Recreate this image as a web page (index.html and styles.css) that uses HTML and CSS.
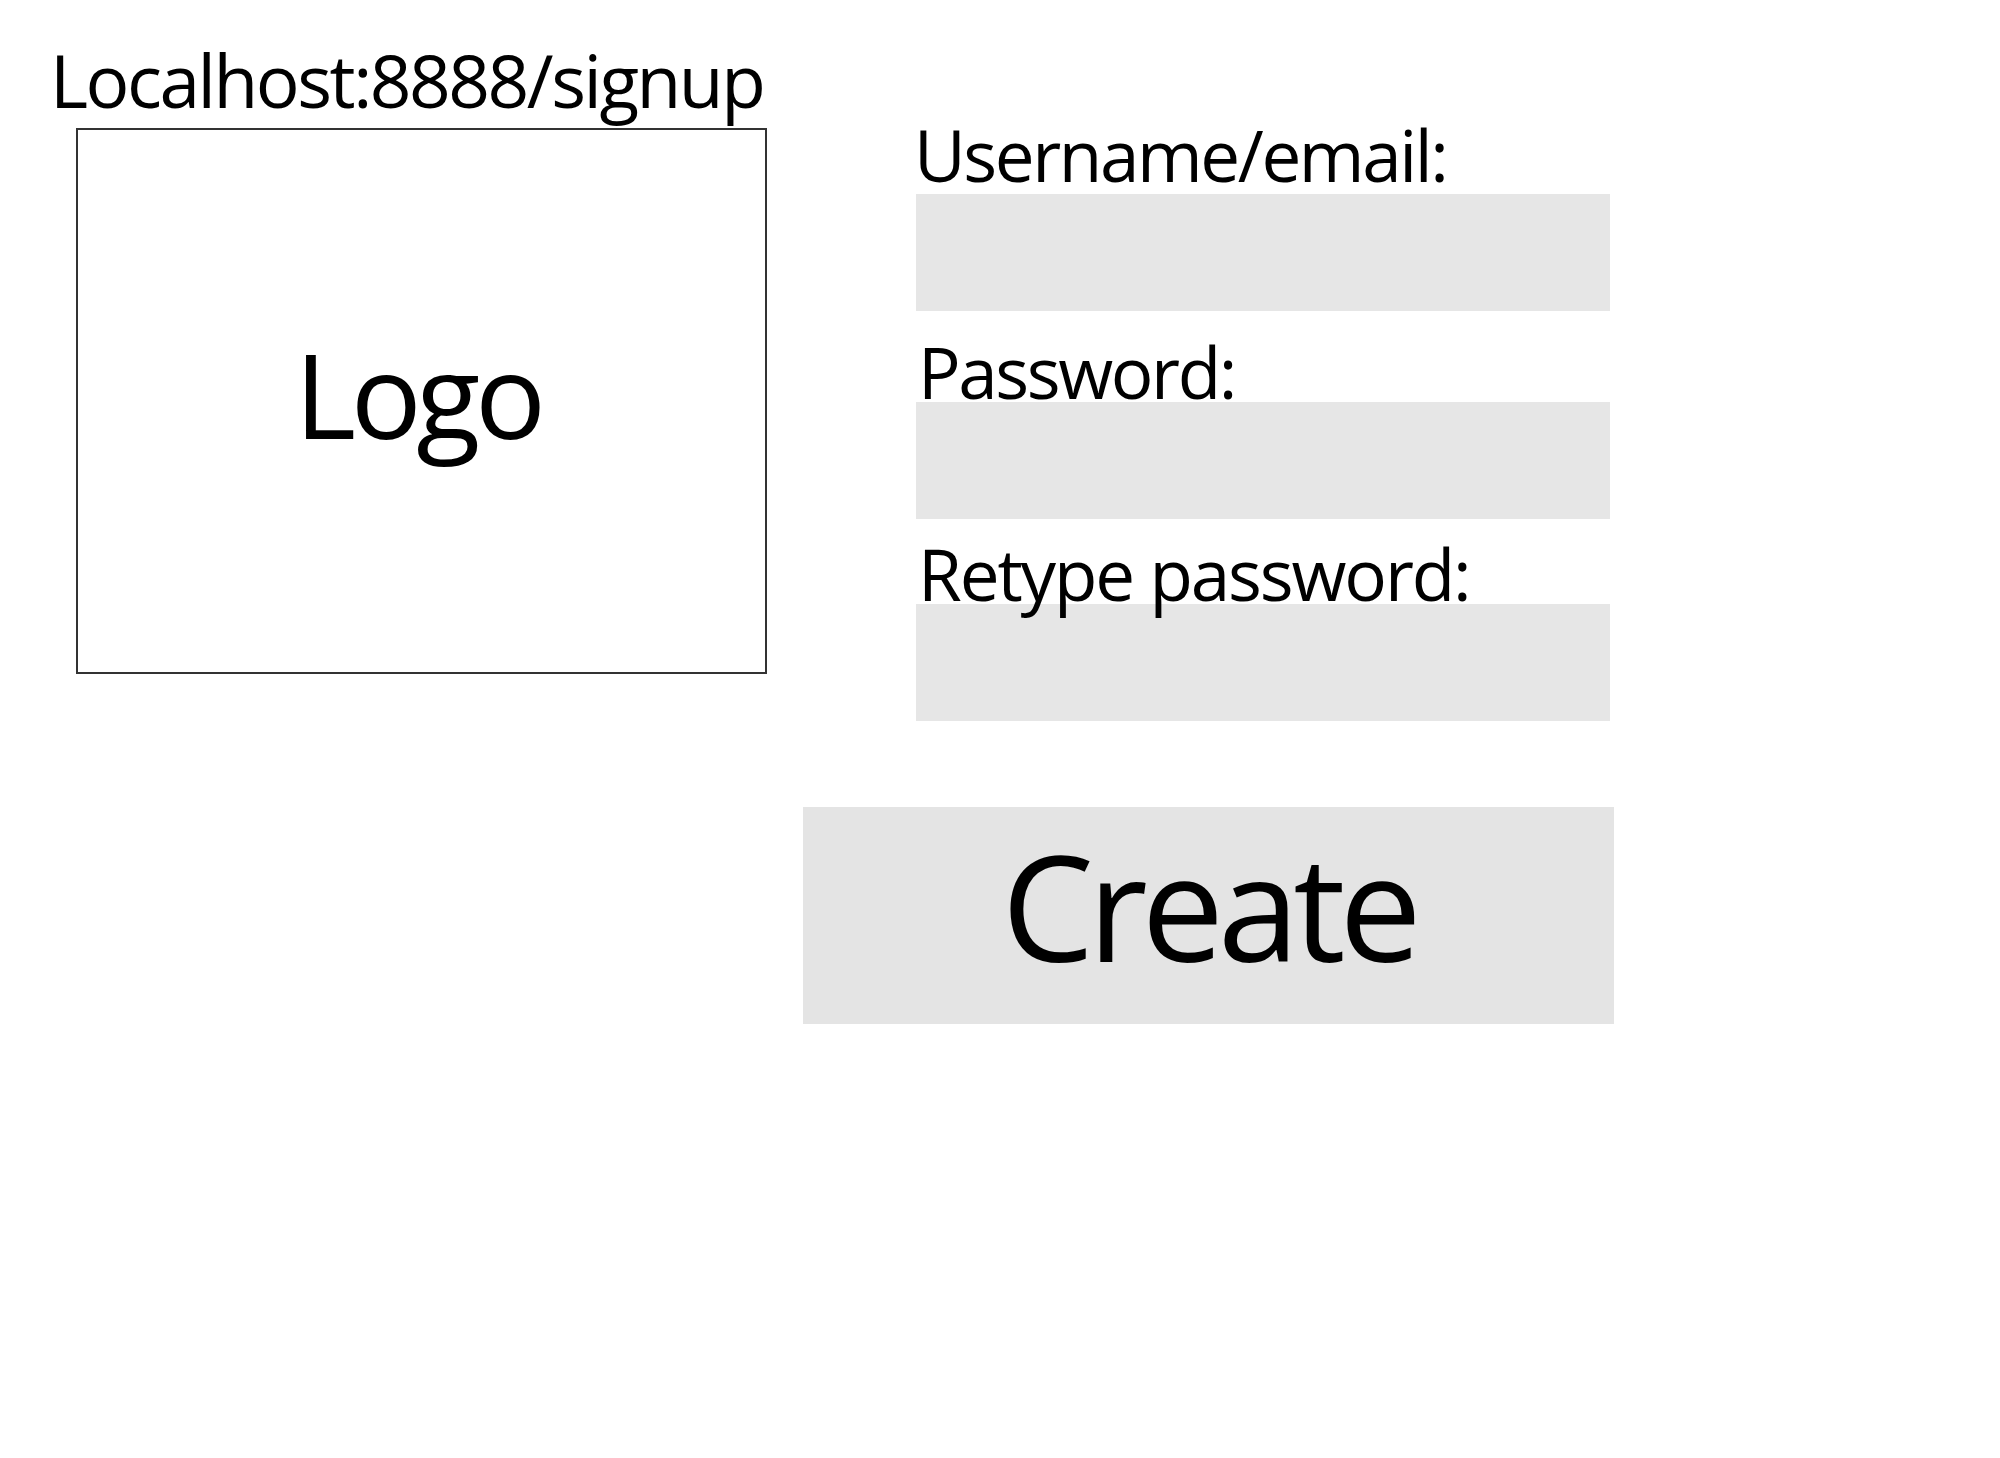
FILE: index.html
```html
<!DOCTYPE html>
<html lang="en">
<head>
<meta charset="utf-8">
<title>Signup</title>
<link rel="stylesheet" href="styles.css">
</head>
<body>
<div class="page">
  <div class="top">
    <div class="left">
      <div class="url">Localhost:8888/signup</div>
      <div class="logo-box"><span class="logo-text">Logo</span></div>
    </div>
    <form class="form">
      <div class="field field-first">
        <label class="label" for="user">Username/email:</label>
        <input class="input" id="user" type="text">
      </div>
      <div class="field field-second">
        <label class="label" for="pw">Password:</label>
        <input class="input" id="pw" type="password">
      </div>
      <div class="field field-third">
        <label class="label" for="pw2">Retype password:</label>
        <input class="input" id="pw2" type="password">
      </div>
    </form>
  </div>
  <div class="actions">
    <button class="create" type="button">Create</button>
  </div>
</div>
</body>
</html>
```

FILE: styles.css
```css
html, body {
  margin: 0;
  padding: 0;
  background: #ffffff;
}

body {
  font-family: "Open Sans", "Noto Sans", sans-serif;
  color: #000000;
}

.page {
  padding: 40px 0 0 50px;
}

.top {
  display: flex;
  align-items: flex-start;
}

.left {
  width: 718px;
  display: flex;
  flex-direction: column;
}

.url {
  font-size: 73px;
  line-height: 80px;
  letter-spacing: -0.034em;
  margin-bottom: 8px;
  white-space: nowrap;
}

.logo-box {
  margin-left: 26px;
  width: 691px;
  height: 546px;
  box-sizing: border-box;
  border: 2px solid #333333;
  display: flex;
  align-items: center;
  justify-content: center;
  padding-bottom: 14px;
}

.logo-text {
  font-size: 118px;
  line-height: 1;
  letter-spacing: -0.046em;
  margin-right: 8px;
}

.form {
  margin: 79px 0 0 148px;
  width: 694px;
  display: flex;
  flex-direction: column;
}

.field {
  display: flex;
  flex-direction: column;
}

.field-second {
  margin-top: 25px;
}

.field-third {
  margin-top: 19px;
}

.label {
  position: relative;
  z-index: 1;
  font-size: 71px;
  line-height: 71px;
  letter-spacing: -0.034em;
  margin-bottom: -5px;
  margin-left: 2px;
  white-space: nowrap;
}

.field-first .label {
  margin-bottom: 4px;
  margin-left: -2px;
}

.field-third .label {
  letter-spacing: -0.03em;
}

.input {
  display: block;
  width: 694px;
  height: 117px;
  box-sizing: border-box;
  border: none;
  margin: 0;
  padding: 0 16px;
  background: #e6e6e6;
  font-family: inherit;
  font-size: 40px;
  outline: none;
}

.actions {
  margin-top: 86px;
  padding-left: 753px;
}

.create {
  width: 811px;
  height: 217px;
  border: none;
  margin: 0;
  padding: 0 0 21px 0;
  background: #e4e4e4;
  font-family: inherit;
  font-size: 147px;
  line-height: 1;
  letter-spacing: -0.043em;
  color: #000000;
  display: flex;
  align-items: center;
  justify-content: center;
  cursor: pointer;
}
```
